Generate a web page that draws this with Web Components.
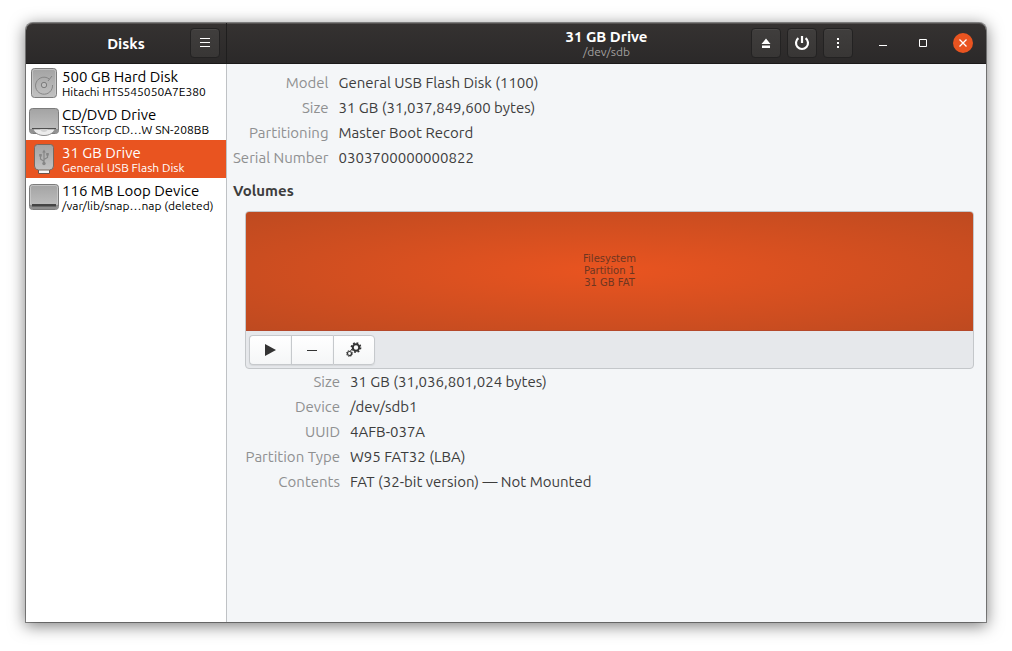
<!DOCTYPE html>
<html lang="en">
<head>
<meta charset="utf-8">
<title>Disks</title>
<style>
    body {
        margin: 0;
        background: #ffffff;
        font-family: Ubuntu, "Noto Sans", "Open Sans", sans-serif;
        font-size: 15px;
        color: #3d3d3d;
    }
</style>
</head>
<body>

<disks-app></disks-app>

<script>
/* ── symbolic icons, 16x16 ── */
const ICONS = {
    menu:  '<path d="M3 3.500h10M3 7.500h10M3 11.500h10" stroke="currentColor"/>',
    eject: '<path d="M8 3.500L12.500 9h-9zM4 10.500h8V13H4z" fill="currentColor"/>',
    power: '<path d="M4.400 3.200a6 6 0 1 0 7.200 0M8 1v7" fill="none" stroke="currentColor" stroke-width="2.200"/>',
    more:  '<path d="M7 3h2v2H7zM7 7h2v2H7zM7 11h2v2H7z" fill="currentColor"/>',
    min:   '<path d="M4 10h8v1H4z" fill="currentColor"/>',
    max:   '<path d="M4.500 4.500h7v7h-7z" fill="none" stroke="currentColor"/>',
    close: '<path d="M4.500 4.500l7 7M11.500 4.500l-7 7" stroke="currentColor" stroke-width="1.300"/>',
    play:  '<path d="M2 2l11 6-11 6z" fill="currentColor"/>',
    minus: '<path d="M2 8h10v1H2z" fill="currentColor"/>',
    gears: `<g fill="none" stroke="currentColor">
                <circle cx="10" cy="5.500" r="3.200" stroke-width="2"/>
                <circle cx="10" cy="5.500" r="4.600" stroke-width="1.600" stroke-dasharray="1.810 1.803"/>
                <circle cx="3.500" cy="11.500" r="2" stroke-width="1.200"/>
                <circle cx="3.500" cy="11.500" r="3" stroke-width="1" stroke-dasharray="1.178 1.178"/>
            </g>`
};

/* ── device pictures, 32x32 ── */
const METAL = `
    <defs><linearGradient id="metal" x1="0" y1="0" x2="0" y2="1">
        <stop offset="0" stop-color="#a3a3a3"/><stop offset="1" stop-color="#c2c2c2"/>
    </linearGradient></defs>`;

const DEVICES = {
    hdd: `
        <rect x="3.500" y="1.500" width="25" height="29" rx="3" fill="url(#metal)" stroke="#7c7c7c"/>
        <path d="M4.500 27.500v-23a2 2 0 0 1 2-2h19a2 2 0 0 1 2 2v23" fill="none" stroke="#cfcfcf" stroke-opacity=".7"/>
        <path d="M21.500 12.200A8.500 8.500 0 1 0 24.500 18M20 14l4-5" fill="none" stroke="#858585"/>
        <circle cx="16" cy="18" r="2.700" fill="#bdbdbd" stroke="#7c7c7c"/>`,
    optical: `
        <rect x="1.500" y="3.500" width="29" height="25" rx="3" fill="url(#metal)" stroke="#7c7c7c"/>
        <path d="M2 24h28v2a2 2 0 0 1-2 2H4a2 2 0 0 1-2-2z" fill="#919191"/>
        <path d="M5 24h22c-1.500 4-5.500 6.500-11 6.500S6.500 28 5 24z" fill="#ececec" stroke="#8d8d8d"/>
        <path d="M12 24h8c-.5 2-2 3-4 3s-3.500-1-4-3z" fill="#d2d2d2"/>
        <path d="M4 23.500h24" stroke="#4e4e4e"/>`,
    usb: `
        <path d="M10.500 25.500h11v5h-11z" fill="#f7f7f7" stroke="#6f5348"/>
        <path d="M9.500 1.500h13a3 3 0 0 1 3 3V23a4 4 0 0 1-4 4h-11a4 4 0 0 1-4-4V4.500a3 3 0 0 1 3-3z" fill="url(#metal)" stroke="#77685f"/>
        <path d="M16 9v11M16 18.500l-3.500-2.500v-3M16 16.500l3.500-2v-3" fill="none" stroke="#868686" stroke-width="1.200"/>
        <path d="M16 6.500l1.800 3h-3.600zM11.200 11h2.600v2.600h-2.600zM18.200 10h2.600v2.600h-2.600z" fill="#868686"/>
        <circle cx="16" cy="20.500" r="1.700" fill="#868686"/>`,
    removable: `
        <rect x="1.500" y="3.500" width="29" height="25" rx="3" fill="url(#metal)" stroke="#7c7c7c"/>
        <path d="M2.500 23V6.500a2 2 0 0 1 2-2h23a2 2 0 0 1 2 2V23" fill="none" stroke="#cfcfcf" stroke-opacity=".7"/>
        <path d="M2 24h28v2a2 2 0 0 1-2 2H4a2 2 0 0 1-2-2z" fill="#8e8e8e"/>
        <path d="M4 23h24v2.500H4z" fill="#454545"/>`
};

const icon = (name, size = 16) =>
    `<svg width="${size}" height="${size}" viewBox="0 0 16 16" aria-hidden="true">${ICONS[name]}</svg>`;

class DisksElement extends HTMLElement {
    constructor() {
        super();
        this.attachShadow({ mode: 'open' });
    }

    connectedCallback() {
        this.shadowRoot.innerHTML = this.render();
    }
}

/**
 * HeaderButton
 *
 * Attributes:
 *   icon     : key of ICONS
 *   label    : accessible name
 *   variant  : "window" or "close" for the flat window controls
 */
class HeaderButton extends DisksElement {
    render() {
        return `
            <style>
                :host { display: block; }
                button {
                    display: grid;
                    place-items: center;
                    box-sizing: border-box;
                    width: 30px;
                    height: 30px;
                    padding: 0;
                    color: #ffffff;
                    background: linear-gradient(#403e3d, #383635);
                    border: 1px solid #232222;
                    border-radius: 4px;
                    box-shadow: inset 0 1px #4a4847;
                }
                :host([variant]) button {
                    width: 20px;
                    height: 20px;
                    background: none;
                    border: 0;
                    border-radius: 50%;
                    box-shadow: none;
                }
                :host([variant="close"]) button { background: #e95420; }
                svg { display: block; }
            </style>
            <button type="button" aria-label="${this.getAttribute('label')}">${icon(this.getAttribute('icon'))}</button>
        `;
    }
}

class HeaderBar extends DisksElement {
    render() {
        return `
            <style>
                :host {
                    display: grid;
                    grid-template-columns: 1fr auto 1fr;
                    align-items: center;
                    box-sizing: border-box;
                    height: 41px;
                    padding: 0 var(--bar-padding, 6px);
                    background: linear-gradient(#353231, #2b2929);
                    border-bottom: 1px solid #1b1a1a;
                    box-shadow: inset 0 1px #555251;
                    color: #ffffff;
                }
                .title { grid-column: 2; text-align: center; }
                .end   { display: flex; justify-content: flex-end; align-items: center; }
            </style>
            <div class="title"><slot name="title"></slot></div>
            <div class="end"><slot></slot></div>
        `;
    }
}

/**
 * DriveRow
 *
 * Attributes:
 *   device   : key of DEVICES
 *   selected : highlights the row
 */
class DriveRow extends DisksElement {
    render() {
        return `
            <style>
                :host { display: block; }
                button {
                    display: flex;
                    align-items: center;
                    gap: 2px;
                    width: 100%;
                    height: 38px;
                    padding: 0 2px;
                    border: 0;
                    background: none;
                    color: #000000;
                    font: inherit;
                    text-align: left;
                    white-space: nowrap;
                }
                :host([selected]) button { background: #e95420; color: #ffffff; }
                svg { flex: none; }
                .text { display: flex; flex-direction: column; }
                .name   { font-size: 15px; line-height: 17px; }
                .detail { font-size: 12px; line-height: 14px; }
            </style>
            <button type="button" aria-pressed="${this.hasAttribute('selected')}">
                <svg width="32" height="32" viewBox="0 0 32 32" aria-hidden="true">${METAL}${DEVICES[this.getAttribute('device')]}</svg>
                <span class="text">
                    <span class="name"><slot></slot></span>
                    <span class="detail"><slot name="detail"></slot></span>
                </span>
            </button>
        `;
    }
}

class PropertyList extends DisksElement {
    render() {
        return `
            <style>
                :host { display: block; }
                dl {
                    display: grid;
                    grid-template-columns: minmax(95px, max-content) 1fr;
                    column-gap: 10px;
                    margin: 0;
                    line-height: 25px;
                }
                dt { color: #8f9091; text-align: right; white-space: nowrap; }
                dd { margin: 0; }
            </style>
            <dl>${[...this.querySelectorAll('data')].map(d =>
                `<dt>${d.value}</dt><dd>${d.textContent}</dd>`).join('')}</dl>
        `;
    }
}

class VolumeGrid extends DisksElement {
    render() {
        return `
            <style>
                :host {
                    display: block;
                    border: 1px solid #c4c7ca;
                    border-radius: 4px;
                    background: #e6e8eb;
                    overflow: hidden;
                }
                .partition {
                    display: grid;
                    place-items: center;
                    height: 118px;
                    background: radial-gradient(ellipse farthest-corner, #e95420, #be4a20);
                    border-bottom: 1px solid #b5482a;
                    color: #6e3620;
                    font: 10px/12px "DejaVu Sans", sans-serif;
                    text-align: center;
                }
                .toolbar { display: flex; padding: 4px 3px 3px; }
                button {
                    display: grid;
                    place-items: center;
                    box-sizing: border-box;
                    width: 42px;
                    height: 30px;
                    padding: 0;
                    border: 1px solid #c6c9cc;
                    border-right: 0;
                    background: linear-gradient(#ffffff, #f5f6f7);
                    color: #333333;
                    box-shadow: 0 1px 1px #d6d8db;
                }
                button:first-child { border-radius: 4px 0 0 4px; }
                button:last-child  { border-radius: 0 4px 4px 0; border-right: 1px solid #c6c9cc; }
            </style>
            <div class="partition"><div>Filesystem<br>Partition 1<br>31 GB FAT</div></div>
            <div class="toolbar">
                <button type="button" aria-label="Mount">${icon('play')}</button>
                <button type="button" aria-label="Delete partition">${icon('minus')}</button>
                <button type="button" aria-label="Partition options">${icon('gears')}</button>
            </div>
        `;
    }
}

class DisksApp extends DisksElement {
    render() {
        return `
            <style>
                :host {
                    display: grid;
                    box-sizing: border-box;
                    min-height: 100vh;
                    padding: 23px 26px 29px;
                }
                .window {
                    display: grid;
                    grid-template-columns: 200px 1fr;
                    border-radius: 7px 7px 0 0;
                    box-shadow: 0 0 0 1px rgba(0, 0, 0, .4), 0 3px 16px 1px rgba(0, 0, 0, .5);
                }
                aside, main { display: flex; flex-direction: column; min-width: 0; }
                aside { background: #ffffff; border-radius: 7px 0 0 0; }
                main  { background: #f4f6f8; border-radius: 0 7px 0 0; }
                .list { flex: 1; }
                header-bar { overflow: hidden; }
                aside header-bar { border-radius: 7px 0 0 0; }
                main header-bar  {
                    --bar-padding: 13px;
                    border-left: 1px solid #1f1e1e;
                    border-radius: 0 7px 0 0;
                }
                h1, h2 { margin: 0; font-size: 15px; line-height: 17px; }
                small  { display: block; font-size: 12px; line-height: 14px; color: #a09f9e; }
                .actions { display: flex; gap: 6px; margin-right: 20px; }
                .controls { display: flex; gap: 20px; }
                .content {
                    flex: 1;
                    padding: 6px 12px 16px 6px;
                    border-left: 1px solid #bfc2c5;
                }
                .content h2 { margin: 8px 0; line-height: 25px; }
                .volume { padding-left: 12px; }
            </style>
            <div class="window">
                <aside>
                    <header-bar>
                        <h2 slot="title">Disks</h2>
                        <header-button icon="menu" label="Menu"></header-button>
                    </header-bar>
                    <nav class="list" aria-label="Drives">
                        <drive-row device="hdd">500 GB Hard Disk<span slot="detail">Hitachi HTS545050A7E380</span></drive-row>
                        <drive-row device="optical">CD/DVD Drive<span slot="detail">TSSTcorp CD…W SN-208BB</span></drive-row>
                        <drive-row device="usb" selected>31 GB Drive<span slot="detail">General USB Flash Disk</span></drive-row>
                        <drive-row device="removable">116 MB Loop Device<span slot="detail">/var/lib/snap…nap (deleted)</span></drive-row>
                    </nav>
                </aside>
                <main>
                    <header-bar>
                        <div slot="title"><h1>31 GB Drive</h1><small>/dev/sdb</small></div>
                        <div class="actions">
                            <header-button icon="eject" label="Eject"></header-button>
                            <header-button icon="power" label="Power off"></header-button>
                            <header-button icon="more" label="Drive options"></header-button>
                        </div>
                        <div class="controls">
                            <header-button variant="window" icon="min" label="Minimize"></header-button>
                            <header-button variant="window" icon="max" label="Maximize"></header-button>
                            <header-button variant="close" icon="close" label="Close"></header-button>
                        </div>
                    </header-bar>
                    <div class="content">
                        <property-list>
                            <data value="Model">General USB Flash Disk (1100)</data>
                            <data value="Size">31 GB (31,037,849,600 bytes)</data>
                            <data value="Partitioning">Master Boot Record</data>
                            <data value="Serial Number">0303700000000822</data>
                        </property-list>
                        <h2>Volumes</h2>
                        <div class="volume">
                            <volume-grid></volume-grid>
                            <property-list>
                                <data value="Size">31 GB (31,036,801,024 bytes)</data>
                                <data value="Device">/dev/sdb1</data>
                                <data value="UUID">4AFB-037A</data>
                                <data value="Partition Type">W95 FAT32 (LBA)</data>
                                <data value="Contents">FAT (32-bit version) — Not Mounted</data>
                            </property-list>
                        </div>
                    </div>
                </main>
            </div>
        `;
    }
}

customElements.define('header-button', HeaderButton);
customElements.define('header-bar', HeaderBar);
customElements.define('drive-row', DriveRow);
customElements.define('property-list', PropertyList);
customElements.define('volume-grid', VolumeGrid);
customElements.define('disks-app', DisksApp);
</script>
</body>
</html>
